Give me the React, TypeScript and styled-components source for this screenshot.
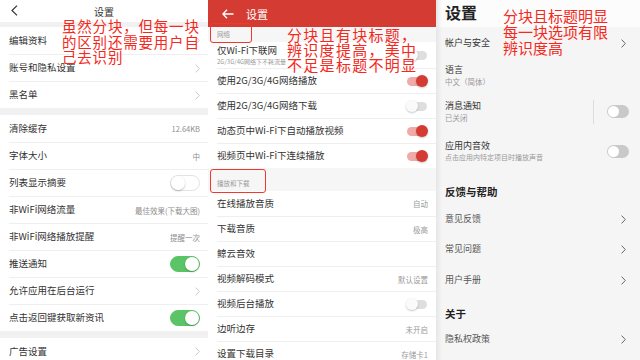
import styled, { createGlobalStyle } from "styled-components";

const GlobalStyle = createGlobalStyle`
  html, body {
    margin: 0;
    padding: 0;
    background: #fff;
  }
  body {
    font-family: "Noto Sans CJK SC", "Noto Sans", sans-serif;
  }
  * {
    box-sizing: border-box;
  }
`;

const Screen = styled.div`
  display: flex;
  width: 640px;
  height: 360px;
  overflow: hidden;
`;

const Phone = styled.div<{ $w: number; $bg: string }>`
  position: relative;
  flex-shrink: 0;
  width: ${({ $w }) => $w}px;
  height: 360px;
  overflow: hidden;
  background: ${({ $bg }) => $bg};
`;

/* ---------- annotations (overlay) ---------- */

const Note = styled.div<{ $top: number; $left: number; $size: number; $lh: number; $ls: number }>`
  position: absolute;
  top: ${({ $top }) => $top}px;
  left: ${({ $left }) => $left}px;
  font-size: ${({ $size }) => $size}px;
  line-height: ${({ $lh }) => $lh}px;
  letter-spacing: ${({ $ls }) => $ls}px;
  color: #f5281c;
  white-space: nowrap;
  z-index: 5;
`;

const MarkBox = styled.div<{ $top: number; $left: number; $w: number; $h: number }>`
  position: absolute;
  top: ${({ $top }) => $top}px;
  left: ${({ $left }) => $left}px;
  width: ${({ $w }) => $w}px;
  height: ${({ $h }) => $h}px;
  border: 1.5px solid #f0392c;
  border-radius: 3px;
  z-index: 5;
`;

/* ---------- shared bits ---------- */

const Chevron = ({ color = "#c8c8c8" }: { color?: string }) => (
  <svg width="5" height="9" viewBox="0 0 5 9">
    <polyline points="0.6,0.6 4.3,4.5 0.6,8.4" fill="none" stroke={color} strokeWidth="1" />
  </svg>
);

const Value = styled.span<{ $color?: string }>`
  font-size: 7.5px;
  color: ${({ $color }) => $color || "#8e8e8e"};
`;

/* ---------- panel 1 ---------- */

const PlainHeader = styled.div`
  position: relative;
  height: 22px;
  display: flex;
  align-items: center;
  justify-content: center;
  font-size: 10px;
  color: #333;

  svg {
    position: absolute;
    left: 11px;
    top: 5px;
  }
`;

const Band = styled.div<{ $h: number }>`
  height: ${({ $h }) => $h}px;
  background: #f1f1f1;
`;

const IosRow = styled.div`
  height: 27px;
  margin-left: 9px;
  padding-right: 8px;
  display: flex;
  align-items: center;
  justify-content: space-between;
  font-size: 9.5px;
  color: #333;
  line-height: 1.2;

  & + & {
    border-top: 1px solid #efefef;
  }
`;

const IosSwitch = styled.div<{ $on: boolean }>`
  position: relative;
  width: 30px;
  height: 16px;
  border-radius: 8px;
  background: ${({ $on }) => ($on ? "#5ac466" : "#fff")};
  border: 1px solid ${({ $on }) => ($on ? "#5ac466" : "#e3e3e3")};

  &::after {
    content: "";
    position: absolute;
    top: 0;
    left: ${({ $on }) => ($on ? "14px" : "0")};
    width: 14px;
    height: 14px;
    border-radius: 50%;
    background: #fff;
    box-shadow: 0 1px 2px rgba(0, 0, 0, 0.25);
  }
`;

/* ---------- panel 2 ---------- */

const RedHeader = styled.div`
  height: 27px;
  background: #d43c33;
  display: flex;
  align-items: center;
  gap: 12px;
  padding-left: 14px;
  font-size: 11px;
  color: #fff;
`;

const GroupTitle = styled.div<{ $h: number }>`
  height: ${({ $h }) => $h}px;
  background: #f6f6f6;
  display: flex;
  align-items: flex-end;
  padding: 0 0 3px 9px;
  font-size: 6.5px;
  color: #9a9a9a;
`;

const MdRow = styled.div<{ $h?: number }>`
  height: ${({ $h }) => $h || 25}px;
  margin-left: 9px;
  padding-right: 8px;
  display: flex;
  align-items: center;
  justify-content: space-between;
  font-size: 9.5px;
  color: #333;
  line-height: 1.2;

  & + & {
    border-top: 1px solid #efefef;
  }
`;

const TwoLine = styled.div`
  display: flex;
  flex-direction: column;
  gap: 1px;
`;

const Sub = styled.span<{ $size: number }>`
  font-size: ${({ $size }) => $size}px;
  color: #9a9a9a;
`;

const MdSwitch = styled.div<{ $on: boolean }>`
  position: relative;
  width: 20px;
  height: 9px;
  margin-right: 1px;
  border-radius: 5px;
  background: ${({ $on }) => ($on ? "#f1aaa6" : "#dedede")};

  &::after {
    content: "";
    position: absolute;
    top: -1.5px;
    left: ${({ $on }) => ($on ? "9px" : "-1px")};
    width: 12px;
    height: 12px;
    border-radius: 50%;
    background: ${({ $on }) => ($on ? "#d43c33" : "#fafafa")};
    box-shadow: 0 1px 2px rgba(0, 0, 0, 0.22);
  }
`;

/* ---------- panel 3 ---------- */

const Shade = styled.div`
  position: absolute;
  top: 0;
  left: 0;
  width: 6px;
  height: 360px;
  background: linear-gradient(to right, #e6e6e6, rgba(240, 240, 240, 0));
`;

const BigHeader = styled.div`
  height: 27px;
  background: #fcfcfc;
  display: flex;
  align-items: center;
  padding: 0 0 3px 9px;
  font-size: 16px;
  font-weight: 700;
  color: #222;
`;

const PrefRow = styled.div<{ $h: number }>`
  height: ${({ $h }) => $h}px;
  padding: 0 14px 0 9px;
  display: flex;
  align-items: center;
  justify-content: space-between;
  font-size: 9px;
  color: #555;
  line-height: 1.2;
`;

const PrefTitle = styled.span`
  color: #333;
`;

const PrefRight = styled.div`
  display: flex;
  align-items: center;
  gap: 13px;
`;

const VLine = styled.div`
  width: 1px;
  height: 24px;
  background: #dcdcdc;
`;

const PrefSwitch = styled.div`
  position: relative;
  width: 22px;
  height: 13px;
  margin-right: -3px;
  border-radius: 7px;
  background: #c9c9c9;

  &::after {
    content: "";
    position: absolute;
    top: 1px;
    left: 1px;
    width: 11px;
    height: 11px;
    border-radius: 50%;
    background: #fff;
  }
`;

const PrefGroup = styled.div<{ $h: number; $pb: number }>`
  height: ${({ $h }) => $h}px;
  padding: 0 0 ${({ $pb }) => $pb}px 9px;
  display: flex;
  align-items: flex-end;
  font-size: 10.5px;
  font-weight: 700;
  color: #222;
  line-height: 1.2;
`;

const App = () => {
  return (
    <Screen>
      <GlobalStyle />

      {/* left screenshot */}
      <Phone $w={208} $bg="#fff">
        <PlainHeader>
          <svg width="7" height="11" viewBox="0 0 7 11">
            <polyline points="6,0.6 1,5.5 6,10.4" fill="none" stroke="#333" strokeWidth="1.2" />
          </svg>
          设置
        </PlainHeader>
        <Band $h={5} />
        <IosRow>编辑资料<Chevron /></IosRow>
        <IosRow>账号和隐私设置<Chevron /></IosRow>
        <IosRow>黑名单<Chevron /></IosRow>
        <Band $h={7} />
        <IosRow>清除缓存<Value>12.64KB</Value></IosRow>
        <IosRow>字体大小<Value>中</Value></IosRow>
        <IosRow>列表显示摘要<IosSwitch $on={false} /></IosRow>
        <IosRow>非WiFi网络流量<Value>最佳效果(下载大图)</Value></IosRow>
        <IosRow>非WiFi网络播放提醒<Value>提醒一次</Value></IosRow>
        <IosRow>推送通知<IosSwitch $on={true} /></IosRow>
        <IosRow>允许应用在后台运行<Chevron /></IosRow>
        <IosRow>点击返回键获取新资讯<IosSwitch $on={true} /></IosRow>
        <Band $h={7} />
        <IosRow>广告设置<Chevron /></IosRow>

        <Note $top={18} $left={62} $size={14.5} $lh={15.5} $ls={0.8}>
          虽然分块，但每一块
          <br />
          的区别还需要用户自
          <br />
          己去识别
        </Note>
      </Phone>

      {/* middle screenshot */}
      <Phone $w={228} $bg="#fff">
        <RedHeader>
          <svg width="12" height="10" viewBox="0 0 12 10">
            <path d="M11.5 5H1M5 0.8 0.9 5 5 9.2" fill="none" stroke="#fff" strokeWidth="1.3" />
          </svg>
          设置
        </RedHeader>
        <GroupTitle $h={15}>网络</GroupTitle>
        <MdRow $h={26}>
          <TwoLine>
            仅Wi-Fi下联网
            <Sub $size={6}>2G/3G/4G网络下不耗流量</Sub>
          </TwoLine>
          <MdSwitch $on={false} />
        </MdRow>
        <MdRow>使用2G/3G/4G网络播放<MdSwitch $on={true} /></MdRow>
        <MdRow>使用2G/3G/4G网络下载<MdSwitch $on={false} /></MdRow>
        <MdRow>动态页中Wi-Fi下自动播放视频<MdSwitch $on={true} /></MdRow>
        <MdRow>视频页中Wi-Fi下连续播放<MdSwitch $on={true} /></MdRow>
        <GroupTitle $h={23}>播放和下载</GroupTitle>
        <MdRow>在线播放音质<Value $color="#9a9a9a">自动</Value></MdRow>
        <MdRow>下载音质<Value $color="#9a9a9a">极高</Value></MdRow>
        <MdRow>鲸云音效</MdRow>
        <MdRow>视频解码模式<Value $color="#9a9a9a">默认设置</Value></MdRow>
        <MdRow>视频后台播放<MdSwitch $on={false} /></MdRow>
        <MdRow>边听边存<Value $color="#9a9a9a">未开启</Value></MdRow>
        <MdRow>设置下载目录<Value $color="#9a9a9a">存储卡1</Value></MdRow>

        <MarkBox $top={23} $left={2} $w={42} $h={20} />
        <MarkBox $top={169} $left={2} $w={56} $h={24} />
        <Note $top={27} $left={79} $size={15} $lh={15.2} $ls={1.3}>
          分块且有块标题，
          <br />
          辨识度提高，美中
          <br />
          不足是标题不明显
        </Note>
      </Phone>

      {/* right screenshot */}
      <Phone $w={204} $bg="#f5f5f5">
        <BigHeader>设置</BigHeader>
        <PrefRow $h={32}>
          <PrefTitle>帐户与安全</PrefTitle>
          <Chevron color="#666" />
        </PrefRow>
        <PrefRow $h={33}>
          <TwoLine>
            <PrefTitle>语言</PrefTitle>
            <Sub $size={7.5}>中文（简体）</Sub>
          </TwoLine>
        </PrefRow>
        <PrefRow $h={39}>
          <TwoLine>
            <PrefTitle>消息通知</PrefTitle>
            <Sub $size={7.5}>已关闭</Sub>
          </TwoLine>
          <PrefRight>
            <VLine />
            <PrefSwitch />
          </PrefRight>
        </PrefRow>
        <PrefRow $h={40}>
          <TwoLine>
            <PrefTitle>应用内音效</PrefTitle>
            <Sub $size={7}>点击应用内特定项目时播放声音</Sub>
          </TwoLine>
          <PrefSwitch />
        </PrefRow>
        <PrefGroup $h={33} $pb={5}>反馈与帮助</PrefGroup>
        <PrefRow $h={30}>意见反馈<Chevron color="#666" /></PrefRow>
        <PrefRow $h={31}>常见问题<Chevron color="#666" /></PrefRow>
        <PrefRow $h={30}>用户手册<Chevron color="#666" /></PrefRow>
        <PrefGroup $h={29} $pb={3}>关于</PrefGroup>
        <PrefRow $h={30}>隐私权政策<Chevron color="#666" /></PrefRow>

        <Shade />
        <Note $top={8} $left={67} $size={15} $lh={16} $ls={0}>
          分块且标题明显
          <br />
          每一块选项有限
          <br />
          辨识度高
        </Note>
      </Phone>
    </Screen>
  );
};

export default App;
